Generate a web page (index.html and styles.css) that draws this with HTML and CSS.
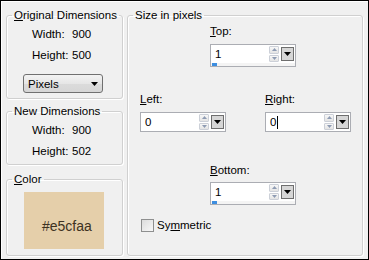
FILE: index.html
```html
<!DOCTYPE html>
<html lang="en">
  <head>
    <meta charset="UTF-8" />
    <title>Canvas Size</title>
    <link rel="stylesheet" href="styles.css">
  </head>
  <body>
    <div class="dialog">
      <div class="left-col">
        <!-- Original Dimensions -->
        <fieldset class="group group-orig">
          <legend><u>O</u>riginal Dimensions</legend>
          <div class="dims">
            <span>Width:</span><span>900</span>
            <span>Height:</span><span>500</span>
          </div>
          <div class="select">
            <span>Pixels</span>
            <svg width="7" height="4" viewBox="0 0 7 4"><path d="M0 0h7L3.5 4z" fill="#000"/></svg>
          </div>
        </fieldset>

        <!-- New Dimensions -->
        <fieldset class="group group-new">
          <legend>New Dimensions</legend>
          <div class="dims">
            <span>Width:</span><span>900</span>
            <span>Height:</span><span>502</span>
          </div>
        </fieldset>

        <!-- Color -->
        <fieldset class="group group-color">
          <legend><u>C</u>olor</legend>
          <div class="swatch">#e5cfaa</div>
        </fieldset>
      </div>

      <!-- Size in pixels -->
      <fieldset class="group group-size">
        <legend>Size in pixels</legend>

        <div class="field field-top">
          <label><u>T</u>op:</label>
          <div class="spin">
            <div class="spin-row">
              <span class="spin-value">1</span>
              <span class="spin-btns">
                <span class="spin-btn"><svg width="5" height="3" viewBox="0 0 5 3"><path d="M0 3L2.5 0 5 3z" fill="#8e9bb3"/></svg></span>
                <span class="spin-btn"><svg width="5" height="3" viewBox="0 0 5 3"><path d="M0 0h5L2.5 3z" fill="#8e9bb3"/></svg></span>
              </span>
              <span class="drop-btn"><svg width="7" height="4" viewBox="0 0 7 4"><path d="M0 0h7L3.5 4z" fill="#000"/></svg></span>
            </div>
            <div class="slider"><span class="thumb"></span></div>
          </div>
        </div>

        <div class="side-row">
          <div class="field field-left">
            <label><u>L</u>eft:</label>
            <div class="spin">
              <div class="spin-row">
                <span class="spin-value">0</span>
                <span class="spin-btns">
                  <span class="spin-btn"><svg width="5" height="3" viewBox="0 0 5 3"><path d="M0 3L2.5 0 5 3z" fill="#8e9bb3"/></svg></span>
                  <span class="spin-btn"><svg width="5" height="3" viewBox="0 0 5 3"><path d="M0 0h5L2.5 3z" fill="#8e9bb3"/></svg></span>
                </span>
                <span class="drop-btn"><svg width="7" height="4" viewBox="0 0 7 4"><path d="M0 0h7L3.5 4z" fill="#000"/></svg></span>
              </div>
            </div>
          </div>
          <div class="field field-right">
            <label><u>R</u>ight:</label>
            <div class="spin">
              <div class="spin-row">
                <span class="spin-value">0<span class="caret"></span></span>
                <span class="spin-btns">
                  <span class="spin-btn"><svg width="5" height="3" viewBox="0 0 5 3"><path d="M0 3L2.5 0 5 3z" fill="#8e9bb3"/></svg></span>
                  <span class="spin-btn"><svg width="5" height="3" viewBox="0 0 5 3"><path d="M0 0h5L2.5 3z" fill="#8e9bb3"/></svg></span>
                </span>
                <span class="drop-btn"><svg width="7" height="4" viewBox="0 0 7 4"><path d="M0 0h7L3.5 4z" fill="#000"/></svg></span>
              </div>
            </div>
          </div>
        </div>

        <div class="field field-bottom">
          <label><u>B</u>ottom:</label>
          <div class="spin">
            <div class="spin-row">
              <span class="spin-value">1</span>
              <span class="spin-btns">
                <span class="spin-btn"><svg width="5" height="3" viewBox="0 0 5 3"><path d="M0 3L2.5 0 5 3z" fill="#8e9bb3"/></svg></span>
                <span class="spin-btn"><svg width="5" height="3" viewBox="0 0 5 3"><path d="M0 0h5L2.5 3z" fill="#8e9bb3"/></svg></span>
              </span>
              <span class="drop-btn"><svg width="7" height="4" viewBox="0 0 7 4"><path d="M0 0h7L3.5 4z" fill="#000"/></svg></span>
            </div>
            <div class="slider"><span class="thumb"></span></div>
          </div>
        </div>

        <label class="check"><span class="box"></span><span>Sy<u>m</u>metric</span></label>
      </fieldset>
    </div>
  </body>
</html>
```

FILE: styles.css
```css
body {
  margin: 0;
  font-family: "Liberation Sans", Arial, sans-serif;
  font-size: 11.5px;
  line-height: 14px;
  color: #000;
}

.dialog {
  box-sizing: border-box;
  width: 369px;
  height: 260px;
  border: 1px solid #000;
  box-shadow: inset 1px 1px 0 #fff;
  background-color: #f0f0f0;
  padding: 7px 5px 0 5px;
  display: flex;
  gap: 4px;
}

.left-col {
  width: 117px;
  display: flex;
  flex-direction: column;
}

.group {
  box-sizing: border-box;
  margin: 0;
  min-width: 0;
  padding: 0 5px;
  border: 1px solid #d0d0d0;
  border-radius: 3px;
  box-shadow: inset 1px 1px 0 #fff, 1px 1px 0 #fff;
}

.group legend {
  padding: 0 2px;
  white-space: nowrap;
}

.group-orig {
  height: 91px;
}

.group-new {
  height: 61px;
  margin-top: 5px;
}

.group-color {
  height: 84px;
  margin-top: 7px;
}

.dims {
  display: grid;
  grid-template-columns: 40px auto;
  row-gap: 7px;
  margin-top: 5px;
  margin-left: 20px;
}

.select {
  box-sizing: border-box;
  width: 80px;
  height: 19px;
  margin-top: 12px;
  margin-left: 11px;
  padding: 0 4px 0 4px;
  border: 1px solid #707070;
  border-radius: 3px;
  background: linear-gradient(#f3f3f3, #e6e6e6 50%, #dbdbdb 51%, #d6d6d6);
  display: flex;
  align-items: center;
  justify-content: space-between;
}

.swatch {
  box-sizing: border-box;
  width: 80px;
  height: 57px;
  margin-top: 6px;
  margin-left: 12px;
  padding: 26px 0 0 18px;
  background-color: #e5cfaa;
  color: #3d3222;
  font-size: 14px;
  line-height: 16px;
}

.group-size {
  width: 236px;
  height: 248px;
}

.field label {
  display: block;
}

.field-top {
  margin-top: 2px;
  margin-left: 77px;
}

.field .spin {
  margin-top: 6px;
}

.spin {
  box-sizing: border-box;
  width: 86px;
  border: 1px solid #abadb3;
  background-color: #fff;
}

.spin-row {
  height: 18px;
  display: flex;
  align-items: center;
}

.spin-value {
  flex: 1;
  padding-left: 4px;
  display: flex;
  align-items: center;
}

.caret {
  display: inline-block;
  width: 1px;
  height: 13px;
  margin-left: 1px;
  background-color: #000;
}

.spin-btns {
  width: 10px;
  height: 16px;
  display: flex;
  flex-direction: column;
  gap: 1px;
  margin-right: 2px;
}

.spin-btn {
  flex: 1;
  box-sizing: border-box;
  border: 1px solid #ccd0d8;
  border-radius: 1px;
  background: linear-gradient(#f7f7f7, #e4e4e4);
  display: flex;
  align-items: center;
  justify-content: center;
}

.drop-btn {
  box-sizing: border-box;
  width: 13px;
  height: 14px;
  margin-right: 1px;
  border: 1px solid #6e6e6e;
  background-color: #d6d6d6;
  display: flex;
  align-items: center;
  justify-content: center;
}

.slider {
  height: 3px;
  background-color: #f4f4f4;
}

.thumb {
  display: block;
  width: 5px;
  height: 3px;
  margin-left: 1px;
  background-color: #3d8ee0;
}

.side-row {
  display: flex;
  justify-content: space-between;
  margin-top: 25px;
  padding: 0 6px 0 7px;
}

.field-bottom {
  margin-top: 31px;
  margin-left: 77px;
}

.field-bottom .spin {
  margin-top: 5px;
}

.check {
  display: flex;
  align-items: center;
  gap: 3px;
  margin-top: 13px;
  margin-left: 8px;
}

.check .box {
  box-sizing: border-box;
  width: 13px;
  height: 13px;
  border: 1px solid #8e8f8f;
  background: linear-gradient(135deg, #dcdcdc, #f8f8f8);
}
```
